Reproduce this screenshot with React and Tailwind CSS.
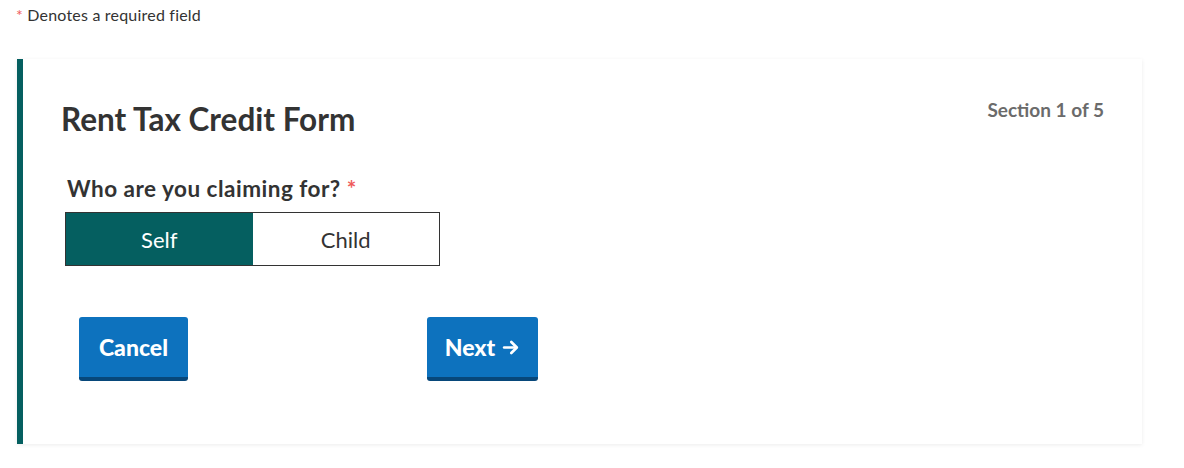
export default function App() {
  return (
    <div className="min-h-[468px] bg-white font-['Lato','Open_Sans',sans-serif] text-[#333]">
      <p className="px-4 pt-[5px] text-[16px] leading-5 tracking-[0.2px] text-[#333]">
        <span className="text-[#ef5b5b]">*</span> Denotes a required field
      </p>

      <div className="ml-[17px] mt-[34px] w-[1125px] border-l-[6px] border-[#055f60] bg-white shadow-[0_1px_4px_rgba(0,0,0,0.08)]">
        <div className="flex items-start justify-between pl-[38px] pr-[38px] pt-[40px]">
          <h1 className="text-[31.5px] font-bold leading-10 text-[#333]">Rent Tax Credit Form</h1>
          <span className="-mt-[3px] text-[19px] font-bold text-[#6b6b6b]">Section 1 of 5</span>
        </div>

        <div className="pl-[42px] pt-[36px]">
          <p className="ml-[2px] text-[22.5px] font-bold leading-7 tracking-[0.5px] text-[#333]">
            Who are you claiming for? <span className="text-[#ef5b5b]">*</span>
          </p>
          <div className="mt-[9px] flex w-[375px] border border-[#333]">
            <button className="h-[52px] w-1/2 bg-[#055f60] text-[22px] text-white">Self</button>
            <button className="h-[52px] w-1/2 bg-white text-[22px] text-[#333]">Child</button>
          </div>
        </div>

        <div className="flex gap-[239px] pl-[56px] pt-[51px] pb-[63px]">
          <button className="h-16 w-[109px] rounded-[3px] border-b-4 border-[#07477a] bg-[#0d72be] text-[23px] font-black text-white">
            Cancel
          </button>
          <button className="flex h-16 w-[111px] items-center justify-center gap-[6px] rounded-[3px] border-b-4 border-[#07477a] bg-[#0d72be] text-[23px] font-black text-white">
            Next
            <svg width="19" height="19" viewBox="0 0 24 24" fill="none" stroke="currentColor" strokeWidth="3.4" strokeLinecap="round" strokeLinejoin="round">
              <path d="M4 12h15" />
              <path d="M13 5l7 7-7 7" />
            </svg>
          </button>
        </div>
      </div>
    </div>
  );
}
